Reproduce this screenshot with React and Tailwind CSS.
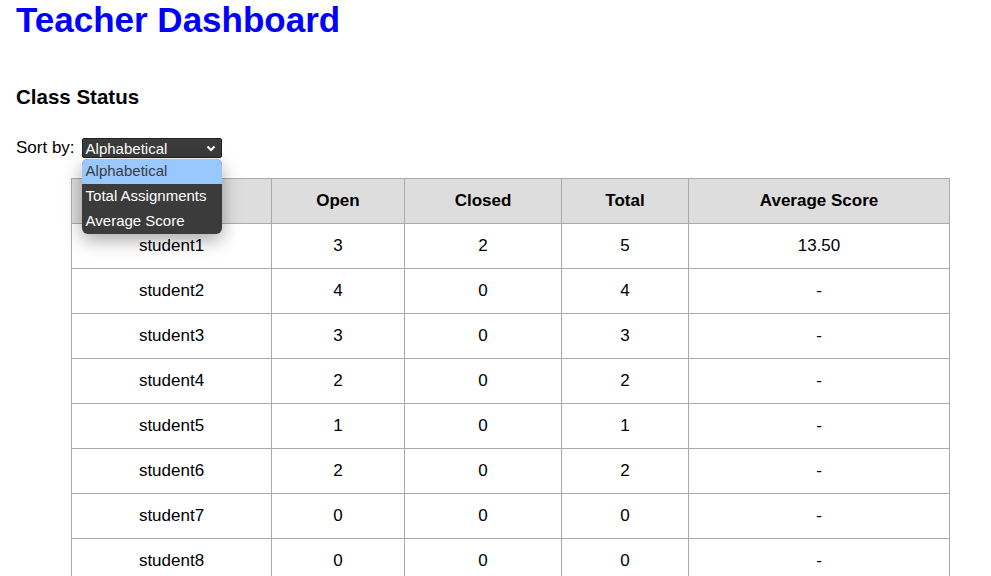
import React from "react";

const students = [
  { name: "student1", open: 3, closed: 2, total: 5, avg: "13.50" },
  { name: "student2", open: 4, closed: 0, total: 4, avg: "-" },
  { name: "student3", open: 3, closed: 0, total: 3, avg: "-" },
  { name: "student4", open: 2, closed: 0, total: 2, avg: "-" },
  { name: "student5", open: 1, closed: 0, total: 1, avg: "-" },
  { name: "student6", open: 2, closed: 0, total: 2, avg: "-" },
  { name: "student7", open: 0, closed: 0, total: 0, avg: "-" },
  { name: "student8", open: 0, closed: 0, total: 0, avg: "-" },
];

const options = ["Alphabetical", "Total Assignments", "Average Score"];

const App = () => {
  return (
    <div className="min-h-screen bg-white px-4 text-black font-['Liberation_Sans',Arial,sans-serif] overflow-hidden">
      {/* Title */}
      <h1 className="text-[35px] leading-[40px] font-bold text-[#0000ff]">
        Teacher Dashboard
      </h1>

      <h2 className="mt-[45px] text-[20.5px] leading-[23px] font-bold">
        Class Status
      </h2>

      {/* Sort control */}
      <div className="relative mt-[30px] flex items-center h-[20px] text-[17px]">
        <span className="mr-[7px]">Sort by:</span>
        <div className="relative">
          <div className="flex items-center justify-between w-[140px] h-[20px] bg-[#3b3b3b] border border-[#222] rounded-[2px] pl-[3px] pr-[5px] text-white text-[15px] leading-none">
            <span>Alphabetical</span>
            <svg width="10" height="7" viewBox="0 0 10 7" fill="none">
              <path d="M1.5 1.5 L5 5 L8.5 1.5" stroke="white" strokeWidth="2" />
            </svg>
          </div>

          {/* Open dropdown list */}
          <ul className="absolute left-0 top-[21px] z-10 w-[140px] bg-[#3b3b3b] rounded-[6px] overflow-hidden shadow-[0_6px_18px_rgba(0,0,0,0.35)] text-[15px]">
            {options.map((opt, i) => (
              <li
                key={opt}
                className={
                  i === 0
                    ? "h-[25px] flex items-center px-[4px] bg-[#99c8ff] text-[#3b3b3b]"
                    : "h-[25px] flex items-center px-[4px] text-white"
                }
              >
                {opt}
              </li>
            ))}
          </ul>
        </div>
      </div>

      {/* Table */}
      <table className="mt-[20px] ml-[55px] w-[879px] border-collapse text-[17px] text-center">
        <thead>
          <tr className="bg-[#dddddd] h-[45px]">
            <th className="w-[200px] border border-[#aaaaaa] font-bold">Student</th>
            <th className="w-[133px] border border-[#aaaaaa] font-bold">Open</th>
            <th className="w-[157px] border border-[#aaaaaa] font-bold">Closed</th>
            <th className="w-[127px] border border-[#aaaaaa] font-bold">Total</th>
            <th className="border border-[#aaaaaa] font-bold">Average Score</th>
          </tr>
        </thead>
        <tbody>
          {students.map((s) => (
            <tr key={s.name} className="h-[45px]">
              <td className="border border-[#aaaaaa]">{s.name}</td>
              <td className="border border-[#aaaaaa]">{s.open}</td>
              <td className="border border-[#aaaaaa]">{s.closed}</td>
              <td className="border border-[#aaaaaa]">{s.total}</td>
              <td className="border border-[#aaaaaa]">{s.avg}</td>
            </tr>
          ))}
        </tbody>
      </table>
    </div>
  );
};

export default App;
